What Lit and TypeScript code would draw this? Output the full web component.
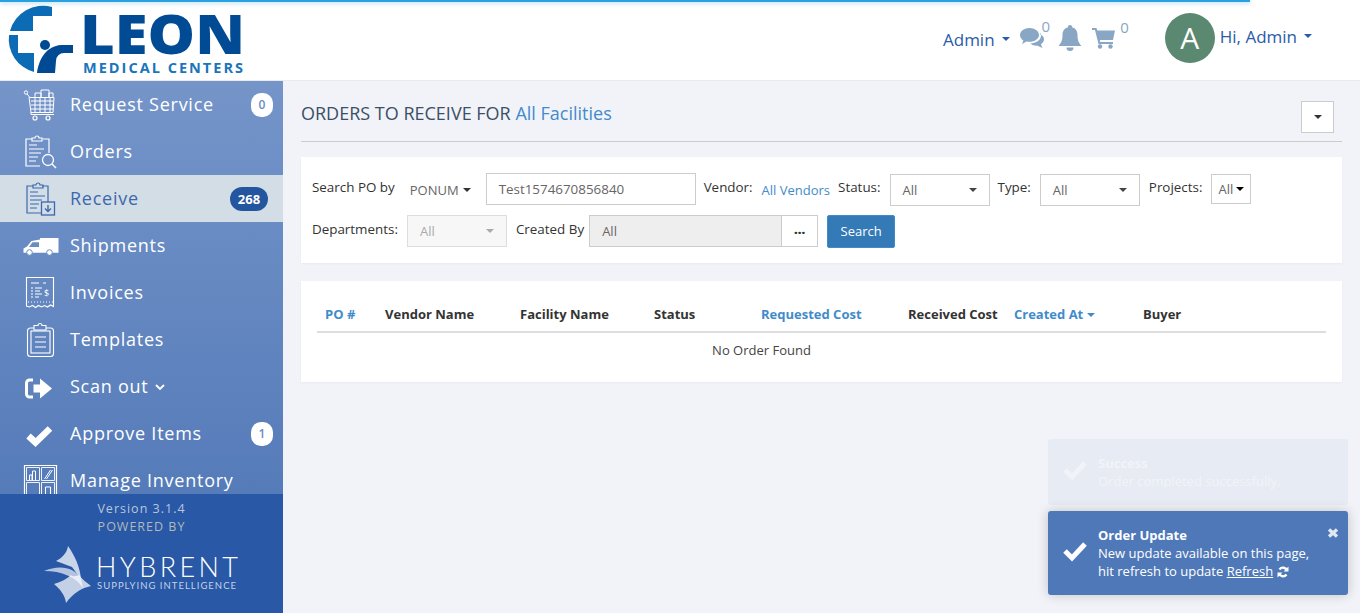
import { LitElement, css, html, svg } from 'lit';
import { customElement } from 'lit/decorators.js';
import { classMap } from 'lit/directives/class-map.js';

const clipboard = svg`
  <path d="M11 5H5v27h21V5h-6" fill="none" stroke="currentColor" stroke-width="1.2"/>
  <path d="M11 7V4h3a2 2 0 0 1 4 0h3v3z" fill="none" stroke="currentColor" stroke-width="1.2"/>
  <path d="M8 11h8M8 15h15M8 19h12M8 23h9M8 27h7" stroke="currentColor" stroke-width="1.2" fill="none"/>`;

const icons: Record<string, unknown> = {
  cart: svg`
    <circle cx="4" cy="5.500" r="1.700" fill="none" stroke="currentColor"/>
    <path d="M5 7l3 3.500h24l-1 15H9L7 10M9 14h22M9 18h22M9 22h22M13 10.500v15M18 10.500v15M23 10.500v15M28 10.500v15M9 25v2.500h23" fill="none" stroke="currentColor" stroke-width="1"/>
    <path d="M13 10V6h6v4M19 10V3h8v7M27 10V6h4v4" fill="none" stroke="currentColor" stroke-width="1"/>
    <circle cx="13" cy="31" r="2" fill="none" stroke="currentColor" stroke-width="1.200"/>
    <circle cx="26" cy="31" r="2" fill="none" stroke="currentColor" stroke-width="1.200"/>`,
  orders: svg`
    <path d="M10 5H4v27h14M21 5h6v14" fill="none" stroke="currentColor" stroke-width="1.200"/>
    <path d="M10 7V4h3a2 2 0 0 1 4 0h3v3z" fill="none" stroke="currentColor" stroke-width="1.200"/>
    <path d="M7 11h8M7 15h15M7 19h12M7 23h9M7 27h7" stroke="currentColor" stroke-width="1.200" fill="none"/>
    <circle cx="26" cy="26" r="5.500" fill="none" stroke="currentColor" stroke-width="1.300"/>
    <path d="M30 30l4 4" stroke="currentColor" stroke-width="1.500"/>`,
  receive: svg`
    ${clipboard}
    <rect x="19.500" y="21" width="13" height="13" fill="#d3dde6" stroke="currentColor" stroke-width="1.300"/>
    <path d="M26 24v6M23 27.500l3 3 3-3" fill="none" stroke="currentColor" stroke-width="1.400"/>`,
  truck: svg`
    <path d="M18 10H36.500V24.700H1.500V20.500L5 18.500 9.500 13 18 11.500z" fill="currentColor"/>
    <path d="M10.500 14.300H17V19H7z" fill="#6a8dc2"/>
    <circle cx="7.500" cy="24.500" r="2.800" fill="currentColor" stroke="#6a8dc2"/>
    <circle cx="27.500" cy="24.500" r="2.800" fill="currentColor" stroke="#6a8dc2"/>`,
  invoice: svg`
    <path d="M4.500 2.500h27v29l-3-1.500-3 2-3-1.500-3 1.500-3-1.500-3 2-3-2-3 1.500-3-1z" fill="none" stroke="currentColor" stroke-width="1.100"/>
    <path d="M9 8h8M21 8h3M9 13h2M13 13h7M9 16h2M13 16h5M9 19h2M13 19h7M9 22h2M13 22h4" stroke="currentColor" stroke-width="1.100"/>
    <text x="22" y="21" font-family="Open Sans" font-size="9" fill="currentColor">$</text>
    <path d="M6 27h25" stroke="currentColor" stroke-dasharray="1 2"/>`,
  template: svg`
    <rect x="5.500" y="6" width="26" height="28.500" rx="3" fill="none" stroke="currentColor" stroke-width="1.100"/>
    <rect x="9" y="9" width="19" height="22" fill="none" stroke="currentColor" stroke-width="1.100"/>
    <path d="M12 6V3.500h4a2 2 0 0 1 4 0h4V8H12z" fill="#6285be" stroke="currentColor" stroke-width="1.100"/>
    <path d="M13 15h11M13 20h11M13 25h11" stroke="currentColor" stroke-width="1.200"/>`,
  signout: svg`
    <path d="M11 11H7.500a3 3 0 0 0-3 3v11a3 3 0 0 0 3 3H11" fill="none" stroke="currentColor" stroke-width="3"/>
    <path d="M11.500 15.500H18V9.500L30 19.500 18 29.500v-6h-6.500z" fill="currentColor"/>`,
  check: svg`<path d="M6.500 20l7 6.500L28 12.500" fill="none" stroke="currentColor" stroke-width="6.500"/>`,
  inventory: svg`
    <path d="M2.500 2.500h32v36h-32z" fill="none" stroke="currentColor" stroke-width="1.200"/>
    <path d="M4.500 4.500h13v13h-13zM19.500 4.500h13v13h-13zM4.500 19.500h13v16h-13zM19.500 19.500h13v16h-13z" fill="none" stroke="currentColor" stroke-width=".9"/>
    <path d="M7.500 17v-5h2.500v5M10.500 17V8h3v9M22.500 16l6-9M24.500 16l6-9" fill="none" stroke="currentColor" stroke-width="1"/>
    <path d="M23.500 36V24h5v12" fill="none" stroke="currentColor" stroke-width="1"/>`,
};

interface NavItem {
  label: string;
  icon: string;
  badge?: string;
  active?: boolean;
  chevron?: boolean;
}

const navItems: NavItem[] = [
  { label: 'Request Service', icon: 'cart', badge: '0' },
  { label: 'Orders', icon: 'orders' },
  { label: 'Receive', icon: 'receive', badge: '268', active: true },
  { label: 'Shipments', icon: 'truck' },
  { label: 'Invoices', icon: 'invoice' },
  { label: 'Templates', icon: 'template' },
  { label: 'Scan out', icon: 'signout', chevron: true },
  { label: 'Approve Items', icon: 'check', badge: '1' },
  { label: 'Manage Inventory', icon: 'inventory' },
];

const columns = [
  { label: 'PO #', sort: true },
  { label: 'Vendor Name' },
  { label: 'Facility Name' },
  { label: 'Status' },
  { label: 'Requested Cost', sort: true },
  { label: 'Received Cost' },
  { label: 'Created At', sort: true, caret: true },
  { label: 'Buyer' },
];

@customElement('app-root')
export class AppRoot extends LitElement {
  static styles = css`
    :host {
      display: flex;
      flex-direction: column;
      height: 100vh;
      overflow: hidden;
      position: relative;
      font-family: 'Open Sans', sans-serif;
      font-size: 13px;
      color: #333;
      background: #f1f3f8;
    }

    .progress {
      position: absolute;
      top: 0;
      left: 0;
      width: 1250px;
      height: 2px;
      background: #29a0e0;
      box-shadow: 0 1px 4px rgba(41, 160, 224, 0.5);
    }

    .topbar {
      flex: none;
      height: 80px;
      background: #fff;
      border-bottom: 1px solid #e8eaee;
      display: flex;
      align-items: flex-start;
    }

    .logo {
      display: block;
      flex: none;
      overflow: visible;
    }

    .top-right {
      margin-left: auto;
      padding-right: 48px;
      display: flex;
      align-items: flex-start;
      color: #2a5ca8;
      font-size: 17px;
    }

    .top-link {
      display: flex;
      align-items: center;
      height: 22px;
      white-space: nowrap;
    }

    .admin {
      margin-top: 28px;
    }

    .caret {
      display: inline-block;
      width: 0;
      height: 0;
      border-left: 4px solid transparent;
      border-right: 4px solid transparent;
      border-top: 4px solid currentColor;
      margin-left: 7px;
    }

    .top-icon {
      display: block;
      color: #89a7c4;
    }

    .comments {
      margin: 27px 0 0 10px;
    }

    .bell {
      margin: 25px 0 0 8px;
    }

    .basket {
      margin: 28px 0 0 10px;
    }

    .count {
      font-size: 15px;
      line-height: 16px;
      color: #89a7c4;
    }

    .count-a {
      margin: 18px 0 0 -3px;
    }

    .count-b {
      margin: 19px 0 0 5px;
    }

    .avatar {
      width: 50px;
      height: 50px;
      border-radius: 50%;
      background: #5a8870;
      color: #fff;
      font-size: 30px;
      line-height: 50px;
      text-align: center;
      margin: 13px 5px 0 36px;
    }

    .hi {
      margin-top: 25px;
    }

    .layout {
      flex: 1;
      display: flex;
      min-height: 0;
    }

    .sidebar {
      flex: none;
      width: 283px;
      display: flex;
      flex-direction: column;
    }

    .menu {
      flex: 1;
      min-height: 0;
      overflow: hidden;
      background: linear-gradient(#7595c9, #557bb9);
    }

    .nav-item {
      height: 47px;
      box-sizing: border-box;
      padding: 0 10px 0 22px;
      display: flex;
      align-items: center;
      color: #fff;
      font-size: 18px;
      letter-spacing: 0.75px;
      white-space: nowrap;
    }

    .nav-item.active {
      background: #d3dde6;
      color: #3d68ad;
    }

    .nav-icon {
      flex: none;
      width: 36px;
      height: 36px;
      margin-right: 12px;
      overflow: visible;
    }

    .nav-label {
      margin-bottom: 2px;
    }

    .chevron {
      margin: 1px 0 0 6px;
      flex: none;
    }

    .badge {
      margin-left: auto;
      min-width: 22px;
      height: 24px;
      box-sizing: border-box;
      border-radius: 10px;
      background: #fff;
      color: #6b8dc4;
      font-size: 12px;
      font-weight: 600;
      letter-spacing: 0;
      line-height: 24px;
      text-align: center;
    }

    .badge.dark {
      min-width: 38px;
      margin-right: 5px;
      background: #24569f;
      color: #fff;
      font-size: 13px;
      font-weight: 700;
      border-radius: 12px;
    }

    .foot {
      flex: none;
      height: 119px;
      background: #2858a6;
      text-align: center;
      color: #b9c7dc;
      font-size: 12.500px;
      letter-spacing: 1px;
      line-height: 18px;
      padding-top: 6px;
      box-sizing: border-box;
    }

    .powered {
      color: #b0babb;
    }

    .hybrent {
      display: block;
      margin-top: 9px;
    }

    .content {
      flex: 1;
      min-width: 0;
      padding: 0 18px;
      box-sizing: border-box;
    }

    .page-head {
      height: 60px;
      border-bottom: 1px solid #ccc;
      display: flex;
      justify-content: space-between;
      align-items: flex-start;
      margin-bottom: 15px;
    }

    h1 {
      margin: 19px 0 0;
      font-size: 18px;
      line-height: 26px;
      font-weight: 400;
      color: #3b4f66;
    }

    h1 a,
    .link {
      color: #428bca;
    }

    .menu-btn {
      width: 33px;
      height: 32px;
      margin: 20px 8px 0 0;
      box-sizing: border-box;
      border: 1px solid #ccc;
      background: #fff;
      display: flex;
      align-items: center;
      justify-content: center;
      color: #333;
    }

    .menu-btn .caret {
      margin: 0;
    }

    .panel {
      background: #fff;
      box-shadow: 0 1px 2px rgba(0, 0, 0, 0.04);
    }

    .filters {
      height: 106px;
      box-sizing: border-box;
      padding: 17px 11px 0;
      margin-bottom: 18px;
    }

    .row {
      display: flex;
      align-items: flex-start;
      gap: 8px;
      height: 32px;
      margin-bottom: 9px;
      white-space: nowrap;
    }

    .label {
      font-size: 13.400px;
      line-height: 18px;
      margin-top: 4px;
      color: #333;
    }

    .row.second .label {
      margin-top: 5px;
    }

    .by {
      display: flex;
      align-items: center;
      height: 32px;
      margin: 0 7px 0 7px;
      color: #666;
    }

    .by .caret {
      margin-left: 4px;
      color: #333;
    }

    .text-input {
      box-sizing: border-box;
      width: 210px;
      height: 32px;
      margin-top: -1px;
      border: 1px solid #ccc;
      padding: 0 12px;
      font-size: 13.400px;
      line-height: 30px;
      color: #666;
    }

    .vendor {
      line-height: 32px;
      margin-left: 1px;
    }

    .select {
      box-sizing: border-box;
      width: 100px;
      height: 32px;
      border: 1px solid #ccc;
      padding: 0 12px;
      display: flex;
      align-items: center;
      justify-content: space-between;
      color: #666;
    }

    .nudge {
      margin-left: 1px;
    }

    .select .caret {
      color: #444;
    }

    .select.small {
      width: 40px;
      height: 30px;
      padding: 0 6px;
    }

    .select.small .caret {
      margin-left: 3px;
      color: #000;
    }

    .select.off {
      background: #f7f7f7;
      color: #aaa;
      border-color: #ddd;
    }

    .select.off .caret {
      color: #aaa;
    }

    .picker {
      display: flex;
      margin-left: -3px;
    }

    .picker-value {
      box-sizing: border-box;
      width: 193px;
      height: 32px;
      border: 1px solid #ccc;
      background: #eee;
      color: #666;
      padding: 0 12px;
      line-height: 30px;
    }

    .picker-btn {
      box-sizing: border-box;
      width: 36px;
      height: 32px;
      border: 1px solid #ccc;
      border-left: 0;
      background: #fff;
      font-weight: 800;
      line-height: 26px;
      text-align: center;
    }

    .search {
      box-sizing: border-box;
      width: 68px;
      height: 33px;
      margin-left: 1px;
      background: #337ab7;
      border: 1px solid #428bca;
      border-radius: 2px;
      color: #fff;
      line-height: 31px;
      text-align: center;
    }

    .orders {
      height: 101px;
      box-sizing: border-box;
      padding: 23px 16px 0;
    }

    .thead {
      display: grid;
      grid-template-columns: 60px 135px 134px 107px 147px 106px 129px 1fr;
      height: 27px;
      border-bottom: 2px solid #ddd;
      padding-left: 8px;
      font-weight: 700;
      line-height: 20px;
      color: #333;
    }

    .thead .sort {
      color: #428bca;
    }

    .thead .caret {
      margin-left: 4px;
      vertical-align: 2px;
    }

    .empty {
      padding-right: 120px;
      text-align: center;
      line-height: 35px;
      color: #444;
    }

    .toast {
      position: absolute;
      left: 1048px;
      width: 300px;
      box-sizing: border-box;
      background: #4f78b8;
      color: #fff;
      border-radius: 3px;
      padding: 15px 14px 15px 50px;
      line-height: 18px;
      box-shadow: 0 0 12px rgba(0, 0, 0, 0.2);
    }

    .toast.faded {
      top: 439px;
      height: 66px;
      opacity: 0.06;
      box-shadow: none;
    }

    .toast.live {
      top: 511px;
      height: 84px;
    }

    .toast b {
      display: block;
      font-weight: 700;
    }

    .toast u {
      text-underline-offset: 1px;
    }

    .toast-check {
      position: absolute;
      left: 14px;
      top: 50%;
      margin-top: -13px;
    }

    .toast-close {
      position: absolute;
      right: 9px;
      top: 16px;
    }

    .refresh {
      vertical-align: -2px;
    }
  `;

  private renderNavItem(item: NavItem) {
    return html`
      <div class=${classMap({ 'nav-item': true, active: !!item.active })}>
        <svg class="nav-icon" viewBox="0 0 36 36">${icons[item.icon]}</svg>
        <span class="nav-label">${item.label}</span>
        ${item.chevron
          ? html`<svg class="chevron" width="10" height="7" viewBox="0 0 10 7"><path d="M1 1l4 4 4-4" fill="none" stroke="currentColor" stroke-width="1.800"/></svg>`
          : null}
        ${item.badge
          ? html`<span class=${classMap({ badge: true, dark: !!item.active })}>${item.badge}</span>`
          : null}
      </div>
    `;
  }

  private renderToastCheck() {
    return html`<svg class="toast-check" width="26" height="22" viewBox="0 0 26 22"><path d="M3 11l7 7L23 4" fill="none" stroke="currentColor" stroke-width="5"/></svg>`;
  }

  render() {
    return html`
      <header class="topbar">
        <svg class="logo" width="250" height="80" viewBox="0 0 250 80">
          <path d="M52 7A34 34 0 0 0 10 31H33V16H52z" fill="#0b6cb5"/>
          <path d="M9 35A34 34 0 0 0 34 72V53H18V35z" fill="#0b6cb5"/>
          <circle cx="45" cy="45" r="5" fill="#004a94"/>
          <path d="M73 45v8H64a8 8 0 0 0-8 8L55 73H37C39 58 47 46 61 45z" fill="#004a94"/>
          <text x="80" y="53.500" font-family="Open Sans" font-weight="800" font-size="54" textLength="165" lengthAdjust="spacingAndGlyphs" fill="#004b93">LEON</text>
          <text x="83" y="73" font-family="Open Sans" font-weight="700" font-size="14.500" textLength="160" fill="#1a75bb">MEDICAL CENTERS</text>
        </svg>
        <div class="top-right">
          <span class="top-link admin">Admin<i class="caret"></i></span>
          <svg class="top-icon comments" width="25" height="22" viewBox="0 0 25 22" fill="currentColor">
            <path d="M9.500 1C4.500 1 0 4 0 8c0 2.300 1.400 4.200 3.400 5.500L2 17l4.500-2.500c1 .2 2 .3 3 .3 5 0 9.500-3 9.500-6.800S14.500 1 9.500 1z"/>
            <path d="M20 5.500c.6 1 1 2 1 3 0 4.600-5 7.800-10.500 8 1.500 1.500 3.700 2.200 6 2.200l.5-.1 5.500 2.400-1.600-3.700c2-1.300 3.100-3 3.100-5 0-2.600-1.500-4-4-4.800z"/>
          </svg>
          <span class="count count-a">0</span>
          <svg class="top-icon bell" width="24" height="26" viewBox="0 0 24 26" fill="currentColor">
            <path d="M12 0a2 2 0 0 0-2 2.300C6.500 3.200 4.500 6.200 4.500 10c0 6-1.500 8-4 11h23c-2.500-3-4-5-4-11 0-3.800-2-6.800-5.500-7.700A2 2 0 0 0 12 0z"/>
            <path d="M8.500 22.500a3.500 3.500 0 0 0 7 0z"/>
          </svg>
          <svg class="top-icon basket" width="23" height="21" viewBox="0 0 23 21" fill="currentColor">
            <path d="M0 0h4.500l.8 2.500H23l-2 9.500H7.800l.4 2H21v2H6.500L3 2H0z"/>
            <circle cx="8" cy="18.500" r="2.200"/>
            <circle cx="18.500" cy="18.500" r="2.200"/>
          </svg>
          <span class="count count-b">0</span>
          <div class="avatar">A</div>
          <span class="top-link hi">Hi, Admin<i class="caret"></i></span>
        </div>
      </header>

      <div class="layout">
        <aside class="sidebar">
          <nav class="menu">${navItems.map((item) => this.renderNavItem(item))}</nav>
          <div class="foot">
            <div>Version 3.1.4</div>
            <div class="powered">POWERED BY</div>
            <svg class="hybrent" width="283" height="62" viewBox="0 545 283 62">
              <path d="M68 546C75 556 80 567 81 579L72 567 56 561C62 558 67 553 68 546z" fill="#fff" fill-opacity=".75"/>
              <path d="M44 571C58 565 74 566 81 579L83 588C76 577 62 571 44 571z" fill="#fff" fill-opacity=".65"/>
              <path d="M54 584C61 582 67 579 71 575 74 578 78 575 79 575 82 579 87 583 91 586 82 588 73 593 66 603 65 595 60 589 54 584z" fill="#fff" fill-opacity=".72"/>
              <text x="96" y="577" font-family="Lato" font-weight="300" font-size="27" textLength="143" fill="#fff">HYBRENT</text>
              <text x="97" y="589" font-family="Lato" font-size="9.500" textLength="140" fill="#c5d2e6">SUPPLYING INTELLIGENCE</text>
            </svg>
          </div>
        </aside>

        <main class="content">
          <div class="page-head">
            <h1>ORDERS TO RECEIVE FOR <a class="link">All Facilities</a></h1>
            <div class="menu-btn"><i class="caret"></i></div>
          </div>

          <section class="panel filters">
            <div class="row">
              <span class="label">Search PO by</span>
              <span class="by">PONUM<i class="caret"></i></span>
              <div class="text-input">Test1574670856840</div>
              <span class="label">Vendor:</span>
              <a class="link vendor">All Vendors</a>
              <span class="label">Status:</span>
              <div class="select nudge">All<i class="caret"></i></div>
              <span class="label">Type:</span>
              <div class="select nudge">All<i class="caret"></i></div>
              <span class="label nudge">Projects:</span>
              <div class="select small nudge">All<i class="caret"></i></div>
            </div>
            <div class="row second">
              <span class="label">Departments:</span>
              <div class="select off nudge">All<i class="caret"></i></div>
              <span class="label nudge">Created By</span>
              <div class="picker">
                <div class="picker-value">All</div>
                <div class="picker-btn">...</div>
              </div>
              <div class="search">Search</div>
            </div>
          </section>

          <section class="panel orders">
            <div class="thead">
              ${columns.map(
                (col) => html`<span class=${classMap({ sort: !!col.sort })}>${col.label}${col.caret ? html`<i class="caret"></i>` : null}</span>`
              )}
            </div>
            <div class="empty">No Order Found</div>
          </section>
        </main>
      </div>

      <div class="toast faded">
        ${this.renderToastCheck()}
        <b>Success</b>
        Order completed successfully.
      </div>
      <div class="toast live">
        ${this.renderToastCheck()}
        <svg class="toast-close" width="12" height="12" viewBox="0 0 12 12"><path d="M2 2.500l8 7M10 2.500l-8 7" stroke="#dfe7f3" stroke-width="3.400"/></svg>
        <b>Order Update</b>
        New update available on this page,<br />
        hit refresh to update <u>Refresh</u>
        <svg class="refresh" width="12" height="12" viewBox="0 0 12 12"><path d="M10 4.500A4.300 4.300 0 0 0 2.500 3.500M2 7.500a4.300 4.300 0 0 0 7.500 1" fill="none" stroke="#fff" stroke-width="2.300"/><path d="M11.500 .5v5h-5zM.5 11.500v-5h5z" fill="#fff"/></svg>
      </div>

      <div class="progress"></div>
    `;
  }
}
